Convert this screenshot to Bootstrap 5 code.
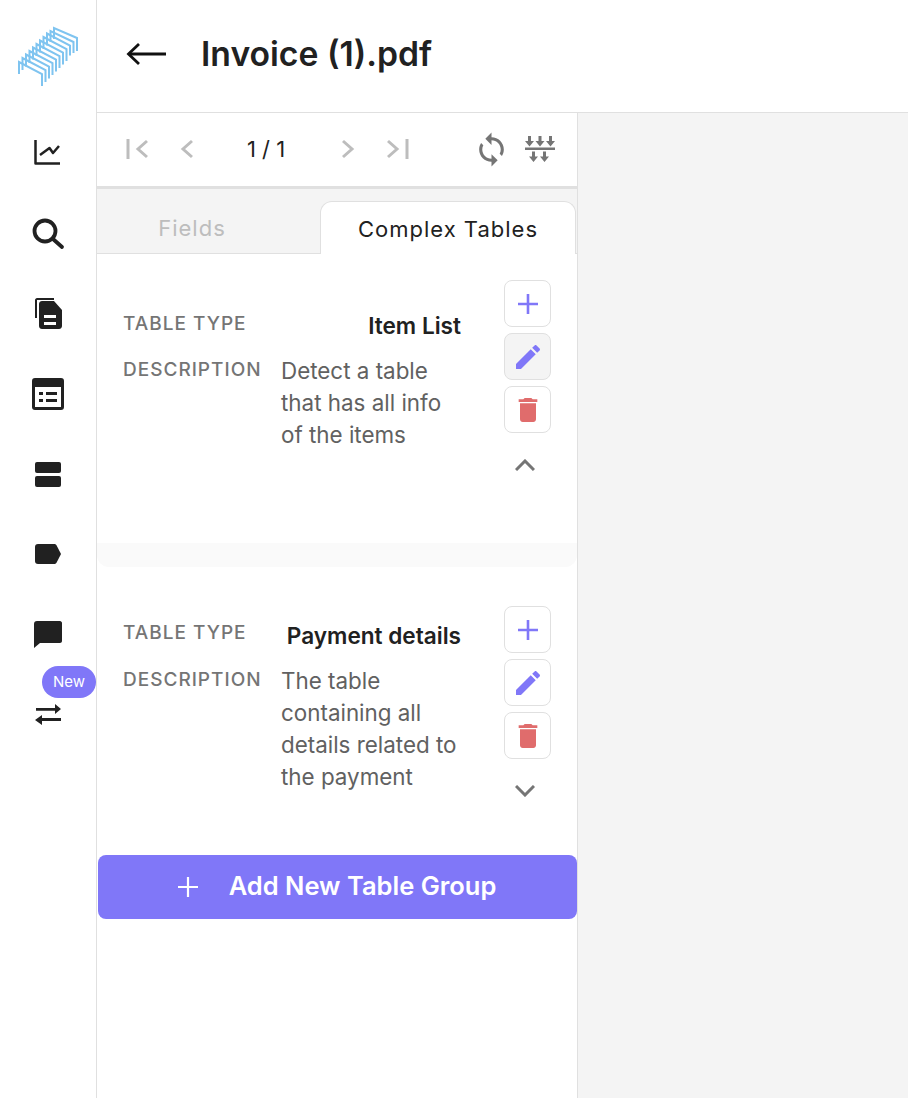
<!DOCTYPE html>
<html lang="en">
<head>
<meta charset="utf-8">
<title>Invoice (1).pdf</title>
<link href="https://cdn.jsdelivr.net/npm/bootstrap@5.3.0/dist/css/bootstrap.min.css" rel="stylesheet">
<style>
html,body{height:100%;overflow:hidden}
body{font-family:Inter,"Liberation Sans",sans-serif;color:#212121;background:#fff}
.app-shell{height:1098px;width:908px}
.side-rail{width:97px;flex:none;border-right:1px solid #e0e0e0;position:relative}
.rail-logo{height:112px}
.rail-logo svg{margin-top:2px}
.rail-item{height:80px;color:#212121}
.rail-shift{padding-top:4px}
.new-pill{position:absolute;left:42px;top:666px;width:54px;height:32px;border-radius:16px;background:#8077f8;color:#fff;font-size:15px}
.main-area{min-width:0}
.top-head{height:113px;border-bottom:1px solid #e0e0e0;padding:0 0 5px 29px;gap:35px}
.doc-title{font-size:33.700px;font-weight:600;line-height:1;margin:0;color:#212121}
.work-area{min-height:0}
.left-panel{width:481px;flex:none;border-right:1px solid #e0e0e0}
.viewer-bg{background:#f4f4f4}
.pager-bar{height:76px;border-bottom:3px solid #e0e0e0;padding:0 22px 1px 28px}
.pager-nums{font-size:22px;width:120px;text-align:center;color:#212121;padding-right:2px}
.slot-a{width:54px}
.slot-b{width:28px}
.slot-c{width:29px}
.pager-tools{gap:15px}
.tab-strip{height:65px;background:#f4f4f4;border-bottom:1px solid #e0e0e0;padding:12px 1px 0 0}
.tab-off{width:190px;font-size:22px;letter-spacing:1px;color:#bdbdbd;padding-top:11px;text-align:center}
.tab-on{width:256px;background:#fff;border:1px solid #e0e0e0;border-bottom:0;border-radius:12px 12px 0 0;font-size:22px;letter-spacing:1px;color:#212121;text-align:center;padding-top:11px;margin-bottom:-1px;margin-left:auto}
.group-row{padding:26px 26px 0 26px}
.group-one{height:289px}
.group-two{height:288px;padding-top:39px}
.group-band{height:24px;background:#fafafa;border-radius:0 0 12px 12px}
.group-fields{flex:1;min-width:0;padding-right:43px}
.group-one .group-fields{padding-top:29px}
.group-two .group-fields{padding-top:12px}
.field-label{width:158px;flex:none;font-size:19px;font-weight:500;letter-spacing:1px;color:#757575;line-height:28px;padding-top:1px}
.field-name{flex:1;text-align:right;font-size:22.600px;font-weight:600;color:#212121;line-height:32px;white-space:nowrap}
.group-one .field-name{padding-top:1px}
.group-two .field-name{padding-top:2px}
.field-desc{flex:1;font-size:22.400px;color:#616161;line-height:32px}
.row-type{margin-bottom:13px}
.tool-col{width:47px;flex:none;gap:6px}
.tool-btn{width:47px;height:47px;border:1px solid #e0e0e0;border-radius:8px;background:#fff;padding:0}
.tool-btn.is-active{background:#f4f4f4}
.chev-wrap{height:38px;padding-right:5px;padding-top:14px}
.add-group{height:64px;background:#8077f8;color:#fff;font-size:25.500px;font-weight:600;border-radius:8px;border:0;gap:31px;padding:0 1px 2px 0;margin:0 0 0 1px;width:479px}
.add-group svg{margin-top:2px}
.add-group:hover{background:#8077f8;color:#fff}
</style>
</head>
<body>
<div class="app-shell d-flex">
  <nav class="side-rail d-flex flex-column">
    <div class="rail-logo d-flex align-items-center justify-content-center">
      <svg width="64" height="64" viewBox="16 26 64 64" fill="none" stroke="#7fc4f0" stroke-width="2">
        <path d="M19 75V63l23 12v12"/>
        <path d="M22.500 71V59l23 12v12"/>
        <path d="M26 67.500v-12l23 12v12"/>
        <path d="M29.500 64V52l23 12v12"/>
        <path d="M33 60.500v-12l23 12v12"/>
        <path d="M36.500 57V45l23 12v12"/>
        <path d="M40 53.500v-12l23 12v12"/>
        <path d="M43.500 50V38l23 12v12"/>
        <path d="M47 46.500v-12l23 12v10"/>
        <path d="M50.500 43V32l23 11v11"/>
        <path d="M54 40V29l23 10v13"/>
      </svg>
    </div>
    <a class="rail-item d-flex align-items-center justify-content-center" href="#" aria-label="Analytics">
      <svg width="30" height="30" viewBox="0 0 30 30" fill="none" stroke="#212121" stroke-width="2.500" stroke-linejoin="round"><path d="M2.500 3v23.500H27"/><path d="M7 18l9.500-7 3.500 5 6-7"/></svg>
    </a>
    <a class="rail-item rail-shift d-flex align-items-center justify-content-center" href="#" aria-label="Search">
      <svg width="34" height="34" viewBox="0 0 34 34" fill="none" stroke="#212121" stroke-width="3.800" stroke-linecap="round"><circle cx="14" cy="14" r="10.500"/><path d="M22 22l9 8"/></svg>
    </a>
    <a class="rail-item rail-shift d-flex align-items-center justify-content-center" href="#" aria-label="Documents">
      <svg width="30" height="34" viewBox="0 0 30 34" fill="#212121"><path d="M2 21V3c0-1 1-2 2-2h17v2H4v18z"/><path fill-rule="evenodd" d="M9 5h12l8 9v16c0 1.500-1 3-3 3H9c-1.500 0-3-1-3-3V8c0-2 1.500-3 3-3zm2 14v3h12v-3zm0 7v3h12v-3z" transform="translate(0 -1)"/></svg>
    </a>
    <a class="rail-item rail-shift d-flex align-items-center justify-content-center" href="#" aria-label="Forms">
      <svg width="32" height="32" viewBox="0 0 32 32" fill="#212121"><path fill-rule="evenodd" d="M3 0h26c2 0 3 1 3 3v26c0 2-1 3-3 3H3c-2 0-3-1-3-3V3c0-2 1-3 3-3zm0 9v20h26V9z"/><path d="M7 14h4v3H7zm7 0h11v3H14zM7 21h4v3H7zm7 0h11v3H14z"/></svg>
    </a>
    <a class="rail-item rail-shift d-flex align-items-center justify-content-center" href="#" aria-label="Sections">
      <svg width="26" height="25" viewBox="0 0 26 25" fill="#212121"><rect width="26" height="11" rx="2"/><rect y="14" width="26" height="11" rx="2"/></svg>
    </a>
    <a class="rail-item rail-shift d-flex align-items-center justify-content-center" href="#" aria-label="Labels">
      <svg width="26" height="20" viewBox="0 0 26 20" fill="#212121"><path d="M3 0h16c1 0 2 .5 2.500 1.300L26 10l-4.500 8.700c-.5.8-1.500 1.300-2.500 1.300H3c-2 0-3-1-3-3V3c0-2 1-3 3-3z"/></svg>
    </a>
    <a class="rail-item rail-shift d-flex align-items-center justify-content-center" href="#" aria-label="Comments">
      <svg width="28" height="27" viewBox="0 0 28 27" fill="#212121"><path d="M3 0h23c1 0 2 1 2 2v18c0 1-1 2-2 2H6l-6 5V3c0-2 1-3 3-3z"/></svg>
    </a>
    <a class="rail-item rail-shift d-flex align-items-center justify-content-center" href="#" aria-label="Transfers">
      <svg width="27" height="21" viewBox="0 0 27 21" fill="#212121"><path d="M1 4h19V0l6 5-6 5V6.800H1zM26 14H7v-3l-7 5 7 5v-4h19z"/></svg>
    </a>
    <span class="new-pill d-flex align-items-center justify-content-center">New</span>
  </nav>

  <div class="main-area flex-grow-1 d-flex flex-column">
    <header class="top-head d-flex align-items-center">
      <svg width="40" height="24" viewBox="0 0 40 24" fill="none" stroke="#111" stroke-width="2.800"><path d="M40 12H3"/><path d="M13 2L2.500 12 13 22"/></svg>
      <h1 class="doc-title">Invoice (1).pdf</h1>
    </header>
    <div class="work-area d-flex flex-grow-1">
      <section class="left-panel d-flex flex-column">
        <div class="pager-bar d-flex align-items-center">
          <span class="slot-a d-flex"><svg width="24" height="20" viewBox="0 0 24 20" fill="none" stroke="#bdbdbd" stroke-width="3"><path d="M3 0v20"/><path d="M22 2l-9 8 9 8"/></svg></span>
          <span class="slot-b d-flex"><svg width="16" height="20" viewBox="0 0 16 20" fill="none" stroke="#bdbdbd" stroke-width="3"><path d="M13 2l-9 8 9 8"/></svg></span>
          <div class="pager-nums">1 / 1</div>
          <span class="slot-c d-flex justify-content-end"><svg width="16" height="20" viewBox="0 0 16 20" fill="none" stroke="#bdbdbd" stroke-width="3"><path d="M3 2l9 8-9 8"/></svg></span>
          <span class="slot-a d-flex justify-content-end"><svg width="24" height="20" viewBox="0 0 24 20" fill="none" stroke="#bdbdbd" stroke-width="3"><path d="M21 0v20"/><path d="M2 2l9 8-9 8"/></svg></span>
          <div class="d-flex align-items-center pager-tools ms-auto">
            <svg width="37" height="37" viewBox="0 0 24 24" fill="#757575"><path d="M12 4V1L8 5l4 4V6c3.310 0 6 2.690 6 6 0 1.010-.25 1.970-.7 2.800l1.460 1.460C19.540 15.030 20 13.570 20 12c0-4.420-3.580-8-8-8zm0 14c-3.310 0-6-2.690-6-6 0-1.010.25-1.970.7-2.800L5.240 7.740C4.460 8.970 4 10.430 4 12c0 4.420 3.580 8 8 8v3l4-4-4-4v3z"/></svg>
            <svg width="30" height="26" viewBox="0 0 30 26" fill="#757575"><path d="M0 11.500h30v2.500H0z"/><path d="M3 0h3v5h3l-4.500 5.500L0 5h3zM13.500 0h3v5h3L15 10.500 10.500 5h3zM24 0h3v5h3l-4.500 5.500L21 5h3zM7 15.500h3v5h3L8.500 26 4 20.500h3zM18 15.500h3v5h3L19.500 26 15 20.500h3z"/></svg>
          </div>
        </div>
        <div class="tab-strip d-flex">
          <div class="tab-off">Fields</div>
          <div class="tab-on">Complex Tables</div>
        </div>

        <div class="group-row group-one d-flex">
          <div class="group-fields">
            <div class="d-flex align-items-start row-type">
              <div class="field-label">TABLE TYPE</div>
              <div class="field-name">Item List</div>
            </div>
            <div class="d-flex">
              <div class="field-label">DESCRIPTION</div>
              <div class="field-desc">Detect a table that has all info of the items</div>
            </div>
          </div>
          <div class="tool-col d-flex flex-column">
            <button class="tool-btn d-flex align-items-center justify-content-center" aria-label="Add"><svg width="20" height="20" viewBox="0 0 20 20" stroke="#8077f8" stroke-width="2.600"><path d="M10 0v20M0 10h20"/></svg></button>
            <button class="tool-btn is-active d-flex align-items-center justify-content-center" aria-label="Edit"><svg width="32" height="32" viewBox="0 0 24 24" fill="#8077f8"><path d="M3 17.250V21h3.750L17.810 9.940l-3.750-3.750L3 17.250zM20.710 7.040c.39-.39.39-1.020 0-1.410l-2.340-2.340c-.39-.39-1.020-.39-1.410 0l-1.830 1.830 3.750 3.750 1.830-1.830z"/></svg></button>
            <button class="tool-btn d-flex align-items-center justify-content-center" aria-label="Delete"><svg width="32" height="32" viewBox="0 0 24 24" fill="#e06c6c"><path d="M6 19c0 1.100.9 2 2 2h8c1.100 0 2-.9 2-2V7H6v12zM19 4h-3.500l-1-1h-5l-1 1H5v2h14V4z"/></svg></button>
            <div class="chev-wrap d-flex align-items-center justify-content-center"><svg width="20" height="12" viewBox="0 0 20 12" fill="none" stroke="#757575" stroke-width="3"><path d="M1 11l9-9 9 9"/></svg></div>
          </div>
        </div>
        <div class="group-band"></div>

        <div class="group-row group-two d-flex">
          <div class="group-fields">
            <div class="d-flex align-items-start row-type">
              <div class="field-label">TABLE TYPE</div>
              <div class="field-name">Payment details</div>
            </div>
            <div class="d-flex">
              <div class="field-label">DESCRIPTION</div>
              <div class="field-desc">The table containing all details related to the payment</div>
            </div>
          </div>
          <div class="tool-col d-flex flex-column">
            <button class="tool-btn d-flex align-items-center justify-content-center" aria-label="Add"><svg width="20" height="20" viewBox="0 0 20 20" stroke="#8077f8" stroke-width="2.600"><path d="M10 0v20M0 10h20"/></svg></button>
            <button class="tool-btn d-flex align-items-center justify-content-center" aria-label="Edit"><svg width="32" height="32" viewBox="0 0 24 24" fill="#8077f8"><path d="M3 17.250V21h3.750L17.810 9.940l-3.750-3.750L3 17.250zM20.710 7.040c.39-.39.39-1.020 0-1.410l-2.340-2.340c-.39-.39-1.020-.39-1.410 0l-1.830 1.830 3.750 3.750 1.830-1.830z"/></svg></button>
            <button class="tool-btn d-flex align-items-center justify-content-center" aria-label="Delete"><svg width="32" height="32" viewBox="0 0 24 24" fill="#e06c6c"><path d="M6 19c0 1.100.9 2 2 2h8c1.100 0 2-.9 2-2V7H6v12zM19 4h-3.500l-1-1h-5l-1 1H5v2h14V4z"/></svg></button>
            <div class="chev-wrap d-flex align-items-center justify-content-center"><svg width="20" height="12" viewBox="0 0 20 12" fill="none" stroke="#757575" stroke-width="3"><path d="M1 1l9 9 9-9"/></svg></div>
          </div>
        </div>

        <button class="btn add-group d-flex align-items-center justify-content-center">
          <svg width="20" height="20" viewBox="0 0 20 20" stroke="#fff" stroke-width="2.200"><path d="M10 0v20M0 10h20"/></svg>
          <span>Add New Table Group</span>
        </button>
      </section>
      <div class="viewer-bg flex-grow-1"></div>
    </div>
  </div>
</div>
<script src="https://cdn.jsdelivr.net/npm/bootstrap@5.3.0/dist/js/bootstrap.bundle.min.js"></script>
</body>
</html>
